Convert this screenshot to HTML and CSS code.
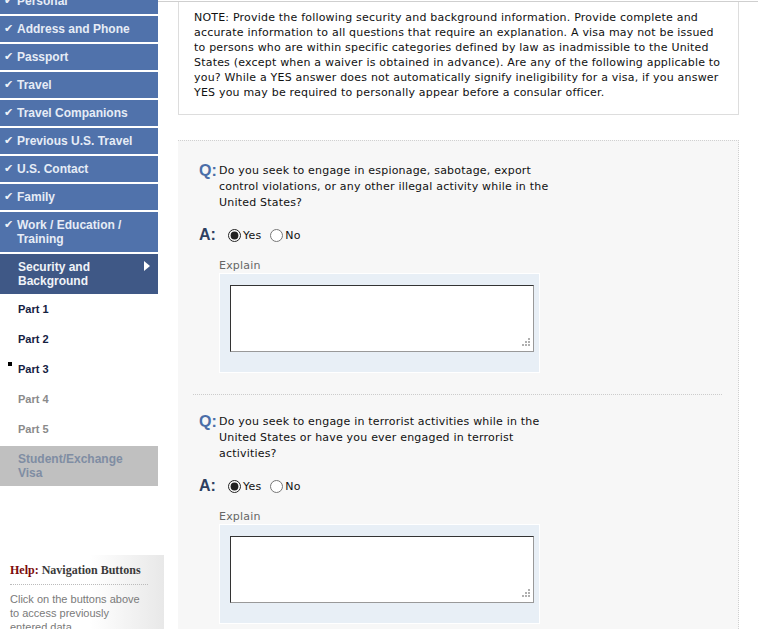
FILE: index.html
```html
<!DOCTYPE html>
<html lang="en">
<head>
	<meta charset="UTF-8">
	<title>Security and Background: Part 3</title>
	<link rel="stylesheet" href="styles.css">
</head>
<body>
	<div class="page">
		<aside class="sidebar">
			<ul class="nav">
				<li class="done"><span class="tick">&#10004;</span>Personal</li>
				<li class="done"><span class="tick">&#10004;</span>Address and Phone</li>
				<li class="done"><span class="tick">&#10004;</span>Passport</li>
				<li class="done"><span class="tick">&#10004;</span>Travel</li>
				<li class="done"><span class="tick">&#10004;</span>Travel Companions</li>
				<li class="done"><span class="tick">&#10004;</span>Previous U.S. Travel</li>
				<li class="done"><span class="tick">&#10004;</span>U.S. Contact</li>
				<li class="done"><span class="tick">&#10004;</span>Family</li>
				<li class="done tall"><span class="tick">&#10004;</span>Work / Education /<br>Training</li>
				<li class="current">Security and<br>Background<span class="arrow"></span></li>
				<li class="part">Part 1</li>
				<li class="part">Part 2</li>
				<li class="part active">Part 3</li>
				<li class="part off">Part 4</li>
				<li class="part off">Part 5</li>
				<li class="disabled">Student/Exchange<br>Visa</li>
			</ul>

			<div class="help">
				<h3><span>Help:</span> Navigation Buttons</h3>
				<p>Click on the buttons above to access previously entered data</p>
			</div>
		</aside>

		<main class="content">
			<div class="note">
				NOTE: Provide the following security and background information. Provide complete and accurate information to all questions that require an explanation. A visa may not be issued to persons who are within specific categories defined by law as inadmissible to the United States (except when a waiver is obtained in advance). Are any of the following applicable to you? While a YES answer does not automatically signify ineligibility for a visa, if you answer YES you may be required to personally appear before a consular officer.
			</div>

			<div class="questions">
				<div class="question">
					<div class="q-row">
						<span class="q-label">Q:</span>
						<span class="q-text">Do you seek to engage in espionage, sabotage, export control violations, or any other illegal activity while in the United States?</span>
					</div>
					<div class="a-row">
						<span class="a-label">A:</span>
						<label><input type="radio" name="q1" checked>Yes</label>
						<label><input type="radio" name="q1">No</label>
					</div>
					<div class="explain">
						<div class="explain-title">Explain</div>
						<div class="explain-box">
							<textarea></textarea>
							<span class="grip"></span>
						</div>
					</div>
				</div>

				<div class="question">
					<div class="q-row">
						<span class="q-label">Q:</span>
						<span class="q-text">Do you seek to engage in terrorist activities while in the United States or have you ever engaged in terrorist activities?</span>
					</div>
					<div class="a-row">
						<span class="a-label">A:</span>
						<label><input type="radio" name="q2" checked>Yes</label>
						<label><input type="radio" name="q2">No</label>
					</div>
					<div class="explain">
						<div class="explain-title">Explain</div>
						<div class="explain-box">
							<textarea></textarea>
							<span class="grip"></span>
						</div>
					</div>
				</div>
			</div>
		</main>
	</div>
</body>
</html>
```

FILE: styles.css
```css
* {
	margin: 0;
	padding: 0;
	box-sizing: border-box;
}

body {
	background-color: #ffffff;
	font-family: "DejaVu Sans", Verdana, sans-serif;
	font-size: 11px;
	color: #111111;
	overflow: hidden;
}

.page {
	display: flex;
	align-items: flex-start;
}

/* Sidebar */
.sidebar {
	width: 164px;
	flex-shrink: 0;
}

.nav {
	list-style: none;
	width: 158px;
	margin-top: -12px;
	font-family: "Liberation Sans", Arial, sans-serif;
	font-size: 12px;
	font-weight: bold;
}

.nav li {
	position: relative;
	margin-bottom: 2px;
}

.nav .done {
	display: flex;
	align-items: center;
	height: 26px;
	padding-left: 4px;
	background-color: #5072ab;
	color: #e6ecf6;
	line-height: 14px;
}

.nav .done.tall {
	height: 40px;
	align-items: flex-start;
	padding-top: 6px;
}

.tick {
	display: inline-block;
	width: 13px;
	font-family: "DejaVu Sans", sans-serif;
	font-size: 11px;
	color: #eef2f8;
}

.nav .current {
	height: 40px;
	padding: 6px 0 0 18px;
	background-color: #3f5886;
	color: #f0f3f8;
	line-height: 14px;
	margin-bottom: 0;
}

/* little white triangle */
.arrow {
	position: absolute;
	top: 7px;
	right: 8px;
	width: 0;
	height: 0;
	border-top: 5px solid transparent;
	border-bottom: 5px solid transparent;
	border-left: 6px solid #ffffff;
}

.nav .part {
	height: 30px;
	line-height: 30px;
	padding-left: 18px;
	margin-bottom: 0;
	font-size: 11px;
	color: #14213f;
}

.nav .part.off {
	color: #8a8a8a;
}

.nav .part.active::before {
	content: "";
	position: absolute;
	left: 8px;
	top: 8px;
	width: 4px;
	height: 4px;
	background-color: #000000;
}

.nav .disabled {
	height: 40px;
	margin-top: 2px;
	padding: 6px 0 0 18px;
	background-color: #c0c0c0;
	color: #7f8da3;
	line-height: 14px;
}

/* Help box */
.help {
	margin-top: 69px;
	padding: 8px 6px 0 10px;
	height: 90px;
	background: linear-gradient(to right, #ffffff 55%, #e8e8e8);
}

.help h3 {
	padding-bottom: 6px;
	border-bottom: 1px dotted #bbbbbb;
	margin-right: 10px;
	font-family: "Liberation Serif", "Times New Roman", serif;
	font-size: 12px;
	color: #3a3a3a;
}

.help h3 span {
	color: #7a0a0a;
}

.help p {
	width: 132px;
	margin-top: 7px;
	font-family: "Liberation Sans", Arial, sans-serif;
	font-size: 11px;
	line-height: 14px;
	color: #7a7a7a;
}

/* Main content */
.content {
	width: 561px;
	margin-left: 14px;
	margin-top: 1px;
	letter-spacing: 0.2px;
}

.content::before {
	content: "";
	display: block;
	margin-left: -20px;
	margin-right: -30px;
	border-top: 1px solid #cfcfcf;
}

.note {
	height: 113px;
	padding: 8px 16px 0 15px;
	border: 1px solid #dddddd;
	border-top: none;
	line-height: 15px;
	color: #111111;
}

.questions {
	margin-top: 25px;
	padding: 0 16px 20px 21px;
	background-color: #f7f7f7;
	border-top: 1px dotted #d0d0d0;
	border-right: 1px dotted #d0d0d0;
}

.question {
	padding-top: 22px;
	padding-bottom: 21px;
}

.question + .question {
	border-top: 1px dotted #cccccc;
	margin-left: -6px;
	padding-left: 6px;
	padding-top: 19px;
}

.q-row {
	display: flex;
	width: 354px;
	line-height: 16px;
}

.q-label {
	width: 20px;
	flex-shrink: 0;
	font-family: "Liberation Sans", Arial, sans-serif;
	font-size: 16px;
	font-weight: bold;
	color: #4a6ea8;
	line-height: 15px;
	letter-spacing: 0;
}

.a-row {
	display: flex;
	align-items: center;
	margin-top: 13px;
	height: 22px;
}

.a-label {
	width: 28px;
	font-family: "Liberation Sans", Arial, sans-serif;
	font-size: 16px;
	font-weight: bold;
	color: #2e3f60;
	letter-spacing: 0;
}

.a-row label {
	display: flex;
	align-items: center;
	margin-right: 8px;
}

.a-row input {
	width: 13px;
	height: 13px;
	margin: 0 2px 0 1px;
	accent-color: #222222;
}

.explain {
	margin-top: 13px;
	padding-left: 20px;
}

.explain-title {
	color: #666666;
	line-height: 14px;
}

.explain-box {
	position: relative;
	width: 321px;
	height: 100px;
	padding: 11px 0 0 10px;
	background-color: #e8eff6;
	border: 1px solid #ffffff;
}

.explain-box textarea {
	display: block;
	width: 304px;
	height: 67px;
	border: 1px solid;
	border-color: #333333 #999999 #999999 #333333;
	background-color: #ffffff;
	outline: none;
	resize: none;
}

/* dotted resize corner drawn over the textarea */
.grip {
	position: absolute;
	left: 305px;
	top: 67px;
	width: 2px;
	height: 2px;
	background-color: #b0b0b0;
	box-shadow: 3px -3px 0 #b0b0b0, 3px 0 0 #b0b0b0, -3px 3px 0 #b0b0b0, 0 3px 0 #b0b0b0, 3px 3px 0 #b0b0b0;
}
```
